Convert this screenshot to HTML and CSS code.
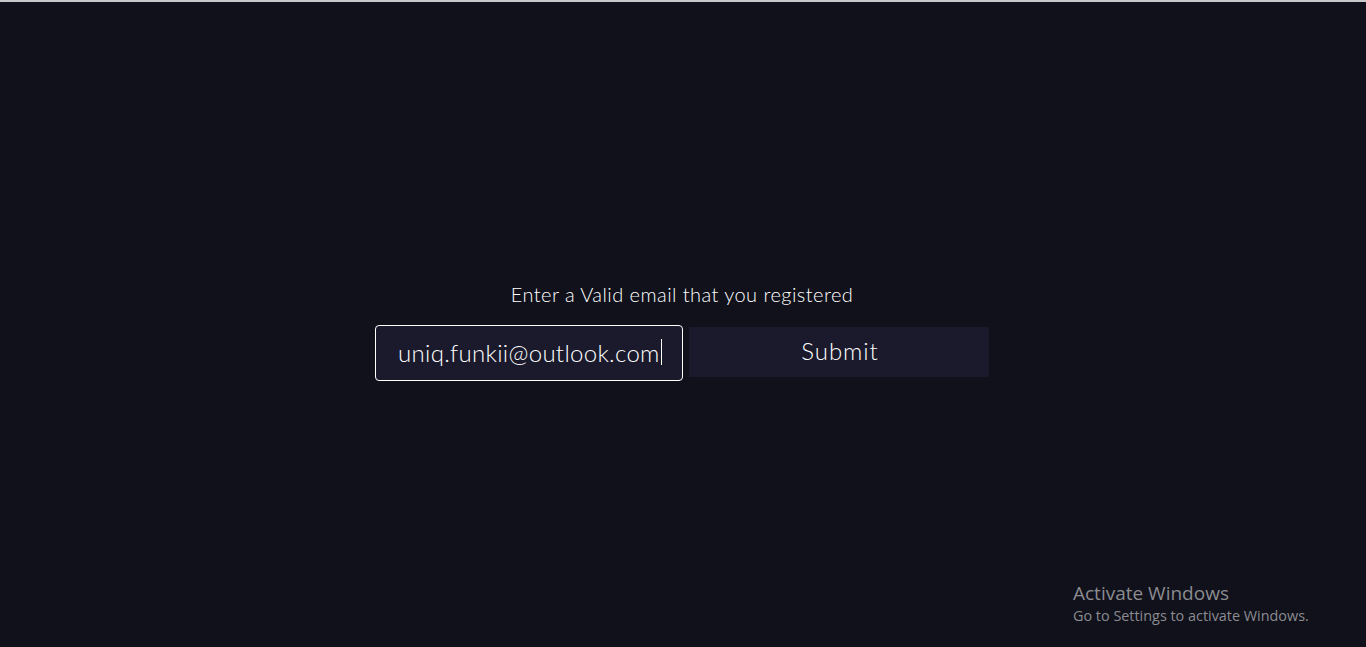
FILE: index.html
```html
<!DOCTYPE html>
<html lang="en">
<head>
<meta charset="utf-8">
<title>Verify email</title>
<link rel="stylesheet" href="styles.css">
</head>
<body>
<main class="page">
  <form class="verify">
    <label class="verify-label" for="email">Enter a Valid email that you registered</label>
    <div class="verify-row">
      <div class="email-box"><span class="email-text">uniq.funkii@outlook.com</span><span class="caret"></span></div>
      <button type="button" class="submit">Submit</button>
    </div>
  </form>
  <div class="watermark">
    <div class="wm-title">Activate Windows</div>
    <div class="wm-sub">Go to Settings to activate Windows.</div>
  </div>
</main>
</body>
</html>
```
FILE: styles.css
```css
html, body {
  margin: 0;
  padding: 0;
  background: #10111b;
}
body {
  border-top: 2px solid #c9c9cc;
}
.page {
  position: relative;
  height: 645px;
  box-sizing: border-box;
  padding-top: 14px;
  display: flex;
  align-items: center;
  justify-content: center;
  font-family: Lato, "Liberation Sans", sans-serif;
  color: #ffffff;
}
.verify {
  display: flex;
  flex-direction: column;
  align-items: center;
  gap: 19px;
  margin-left: -2px;
}
.verify-label {
  font-size: 20px;
  line-height: 24px;
  font-weight: 300;
  letter-spacing: 0.45px;
}
.verify-row {
  display: flex;
  align-items: flex-start;
  gap: 6px;
}
.email-box {
  box-sizing: border-box;
  width: 308px;
  height: 56px;
  border: 1px solid #ffffff;
  border-radius: 4px;
  background: #1b1a2c;
  padding-left: 22px;
  padding-bottom: 2px;
  display: flex;
  align-items: center;
  font-size: 24px;
  font-weight: 300;
  letter-spacing: 0.3px;
}
.caret {
  display: inline-block;
  width: 1px;
  height: 26px;
  background: #ffffff;
  margin-left: 1px;
}
.submit {
  margin-top: 2px;
  width: 300px;
  height: 50px;
  border: none;
  background: #1b1a2c;
  color: #ffffff;
  font-family: Lato, "Liberation Sans", sans-serif;
  font-size: 24px;
  font-weight: 300;
  letter-spacing: 0.9px;
  padding: 0 0 3px 2px;
}
.watermark {
  position: absolute;
  left: 1073px;
  top: 579px;
  color: #8b8b90;
  font-family: "Open Sans", "Noto Sans", sans-serif;
}
.wm-title {
  font-size: 19px;
  line-height: 24px;
}
.wm-sub {
  font-size: 14.4px;
  line-height: 22px;
}
```
